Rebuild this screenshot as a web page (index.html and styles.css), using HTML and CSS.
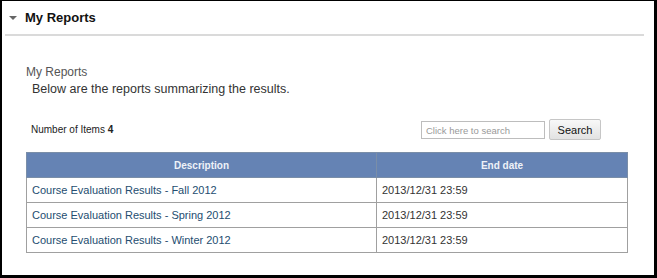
FILE: index.html
```html
<!DOCTYPE html>
<html>
<head>
<meta charset="utf-8">
<link rel="stylesheet" href="styles.css">
</head>
<body>
<div class="frame">
  <div class="panel-head">
    <span class="caret"></span>
    <span class="panel-title">My Reports</span>
  </div>
  <div class="content">
    <div class="subtitle">My Reports</div>
    <div class="intro">Below are the reports summarizing the results.</div>
    <div class="toolbar">
      <div class="count">Number of Items <b>4</b></div>
      <div class="search">
        <input class="search-input" type="text" placeholder="Click here to search">
        <button class="search-btn">Search</button>
      </div>
    </div>
    <table class="reports">
      <thead>
        <tr><th class="col-desc">Description</th><th>End date</th></tr>
      </thead>
      <tbody>
        <tr><td><a href="#">Course Evaluation Results - Fall 2012</a></td><td>2013/12/31 23:59</td></tr>
        <tr><td><a href="#">Course Evaluation Results - Spring 2012</a></td><td>2013/12/31 23:59</td></tr>
        <tr><td><a href="#">Course Evaluation Results - Winter 2012</a></td><td>2013/12/31 23:59</td></tr>
      </tbody>
    </table>
  </div>
</div>
</body>
</html>
```
FILE: styles.css
```css
html, body {
  margin: 0;
  padding: 0;
  background: #fff;
}
.frame {
  width: 657px;
  height: 278px;
  box-sizing: border-box;
  border-style: solid;
  border-color: #000;
  border-width: 1px 3px 3px 2px;
  font-family: "Liberation Sans", Arial, sans-serif;
  color: #333;
  overflow: hidden;
}
.panel-head {
  display: flex;
  align-items: center;
  height: 33px;
  margin: 0 10px 0 3px;
  padding-left: 4px;
  border-bottom: 2px solid #dadada;
}
.caret {
  width: 0;
  height: 0;
  border-left: 4px solid transparent;
  border-right: 4px solid transparent;
  border-top: 4px solid #666;
  margin-right: 8px;
  margin-top: 1px;
}
.panel-title {
  font-size: 13px;
  font-weight: bold;
  color: #111;
}
.content {
  padding: 0 24px;
}
.subtitle {
  margin-top: 29px;
  font-size: 12px;
  line-height: 14px;
  color: #555;
}
.intro {
  margin: 2px 0 0 6px;
  font-size: 12.5px;
  line-height: 16px;
  color: #333;
}
.toolbar {
  display: flex;
  align-items: center;
  justify-content: space-between;
  height: 21px;
  margin: 22px 29px 0 5px;
}
.count {
  font-size: 10px;
  color: #222;
}
.search {
  display: flex;
  align-items: center;
  gap: 4px;
}
.search-input {
  box-sizing: border-box;
  width: 124px;
  height: 18px;
  margin: 1px 0 0 0;
  padding: 0 4px;
  border: 1px solid #bdbdbd;
  font-family: "Liberation Sans", Arial, sans-serif;
  font-size: 9.5px;
  color: #333;
}
.search-input::placeholder {
  color: #999;
}
.search-btn {
  box-sizing: border-box;
  width: 52px;
  height: 21px;
  padding: 0;
  border: 1px solid #c6c6c6;
  border-radius: 2px;
  background: linear-gradient(#f8f8f8, #e2e2e2);
  font-family: "Liberation Sans", Arial, sans-serif;
  font-size: 11px;
  color: #111;
}
.reports {
  width: 602px;
  margin-top: 12px;
  border-collapse: collapse;
  font-size: 11px;
}
.reports th {
  height: 24px;
  padding: 0;
  background: #6583b4;
  color: #eef2f8;
  font-size: 10px;
  font-weight: bold;
  border: 1px solid #8f8f8f;
  border-color: #7a8ea8;
}
.reports th.col-desc {
  width: 349px;
}
.reports td {
  height: 24px;
  padding: 0 5px;
  border: 1px solid #a0a0a0;
  color: #333;
}
.reports td a {
  color: #244d70;
  text-decoration: none;
}
```
